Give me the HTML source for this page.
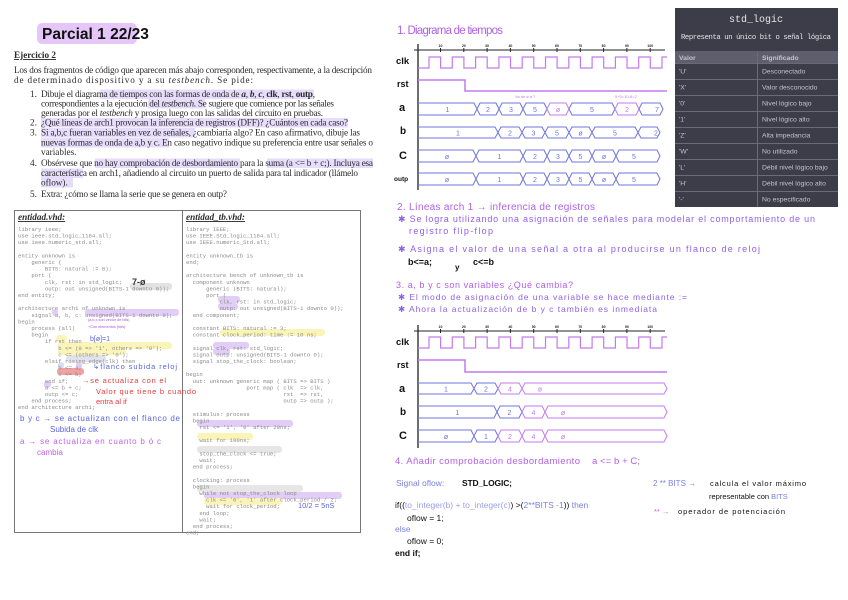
<!DOCTYPE html>
<html><head><meta charset="utf-8"><style>
html,body{margin:0;padding:0;background:#fff;width:848px;height:600px;overflow:hidden}
svg{display:block}
.s{font-family:"Liberation Serif",serif;font-size:9.2px;fill:#2a2a2a}
.m{font-family:"Liberation Mono",monospace;font-size:5.6px;fill:#8a8a8a}
.h{font-family:"Liberation Sans",sans-serif}
.tb{font-family:"Liberation Sans",sans-serif;font-size:6.8px;fill:#c4c4cc}
</style></head><body>
<svg id="S" width="848" height="600" viewBox="0 0 848 600" xmlns="http://www.w3.org/2000/svg">
<rect x="37" y="23" width="100" height="21" rx="5" fill="#e4c6f8"/>
<text x="42" y="39" class="h" font-size="15.5" font-weight="bold" fill="#111">Parcial 1 22/23</text>
<g fill="#e6dcfb">
<rect x="100" y="89.5" width="214" height="9.5"/><rect x="148" y="99" width="57" height="9.5"/>
<rect x="41" y="118" width="307" height="9.5"/><rect x="41" y="128" width="154" height="9.5"/>
<rect x="41" y="138" width="128" height="9.5"/><rect x="95" y="158.5" width="145" height="9.5"/>
<rect x="267" y="158.5" width="106" height="9.5"/><rect x="41" y="168.5" width="42" height="9.5"/><rect x="41" y="178" width="32" height="9.5"/>
</g>
<text x="14" y="58" class="s" font-weight="bold" text-decoration="underline">Ejercicio 2</text>
<text x="14" y="73" class="s" textLength="358">Los dos fragmentos de código que aparecen más abajo corresponden, respectivamente, a la descripción</text>
<text x="14" y="83" class="s" textLength="239">de determinado dispositivo y a su <tspan font-style="italic">testbench</tspan>. Se pide:</text>
<g class="s">
<text x="30" y="97">1.</text><text x="41" y="97" textLength="274">Dibuje el diagrama de tiempos con las formas de onda de <tspan font-weight="bold" font-style="italic">a</tspan>, <tspan font-weight="bold" font-style="italic">b</tspan>, <tspan font-weight="bold" font-style="italic">c</tspan>, <tspan font-weight="bold">clk</tspan>, <tspan font-weight="bold">rst</tspan>, <tspan font-weight="bold">outp</tspan>,</text>
<text x="41" y="106.5" textLength="293">correspondientes a la ejecución del <tspan font-style="italic">testbench</tspan>. Se sugiere que comience por las señales</text>
<text x="41" y="116" textLength="282">generadas por el <tspan font-style="italic">testbench</tspan> y prosiga luego con las salidas del circuito en pruebas.</text>
<text x="30" y="125.5">2.</text><text x="41" y="125.5" textLength="307">¿Qué líneas de arch1 provocan la inferencia de registros (DFF)? ¿Cuántos en cada caso?</text>
<text x="30" y="135.5">3.</text><text x="41" y="135.5" textLength="319">Si a,b,c fueran variables en vez de señales, ¿cambiaría algo? En caso afirmativo, dibuje las</text>
<text x="41" y="145.5" textLength="332">nuevas formas de onda de a,b y c. En caso negativo indique su preferencia entre usar señales o</text>
<text x="41" y="155">variables.</text>
<text x="30" y="166">4.</text><text x="41" y="166" textLength="332">Obsérvese que no hay comprobación de desbordamiento para la suma (a &lt;= b + c;). Incluya esa</text>
<text x="41" y="176" textLength="317">característica en arch1, añadiendo al circuito un puerto de salida para tal indicador (llámelo</text>
<text x="41" y="185.5">oflow).</text>
<text x="30" y="197">5.</text><text x="41" y="197" textLength="186">Extra: ¿cómo se llama la serie que se genera en outp?</text>
</g>
<rect x="14.5" y="210.5" width="346" height="322" fill="none" stroke="#777" stroke-width="1"/>
<line x1="182.5" y1="210" x2="182.5" y2="533" stroke="#777"/>
<text x="18" y="220" class="s" font-size="8.5" font-weight="bold" font-style="italic" text-decoration="underline">entidad.vhd:</text>
<text x="186" y="220" class="s" font-size="8.5" font-weight="bold" font-style="italic" text-decoration="underline">entidad_tb.vhd:</text>
<g>
<rect x="130" y="283" width="42" height="7" rx="3" fill="#e2e2e2"/>
<rect x="52" y="309" width="6" height="7" rx="3" fill="#e2cdf6"/>
<rect x="85" y="309" width="94" height="7" rx="3" fill="#e2cdf6"/>
<rect x="56" y="335" width="11" height="7" rx="3" fill="#fbf4b8"/>
<rect x="58" y="342" width="114" height="7" rx="3" fill="#fbf4b8"/>
<rect x="58" y="348" width="68" height="7" rx="3" fill="#fbf4b8"/>
<rect x="66" y="355" width="40" height="7" rx="3" fill="#e2e2ee"/>
<rect x="58" y="362" width="6" height="7" rx="3" fill="#dcdcf2"/><rect x="76" y="362" width="6" height="7" rx="3" fill="#e2cdf6"/>
<rect x="57" y="368" width="27" height="7" rx="3" fill="#eea2a2"/>
<rect x="44" y="381" width="7" height="7" rx="3" fill="#e2cdf6"/>
<rect x="218" y="296" width="22" height="7" rx="3" fill="#e2cdf6"/>
<rect x="218" y="303" width="20" height="7" rx="3" fill="#e2cdf6"/>
<rect x="220" y="329" width="105" height="7" rx="3" fill="#fbf4b8"/>
<rect x="213" y="342" width="36" height="7" rx="3" fill="#e2cdf6"/>
<rect x="213" y="348" width="17" height="7" rx="3" fill="#e2cdf6"/>
<rect x="197" y="420" width="96" height="7" rx="3" fill="#e2cdf6"/>
<rect x="197" y="433" width="56" height="7" rx="3" fill="#fbf4b8"/>
<rect x="197" y="446" width="85" height="7" rx="3" fill="#e6e6e6"/>
<rect x="197" y="485" width="106" height="7" rx="3" fill="#e6e6e6"/>
<rect x="204" y="492" width="138" height="7" rx="3" fill="#e2cdf6"/>
<rect x="204" y="498" width="78" height="7" rx="3" fill="#fbf4b8"/>
</g>
<g id="codeL" class="m"></g>
<g id="codeR" class="m"></g>
<g class="h">
<text x="132" y="285" font-size="9" font-weight="bold" fill="#333">7-ø</text>
<text x="88" y="321" font-size="3.8" fill="#b050e0">(a,b,c son vector de bits)</text>
<text x="88" y="328" font-size="3.8" fill="#b050e0">+Con elementos (bits)</text>
<text x="90" y="341" font-size="7" fill="#5a64e0">b[ø]=1</text>
<text x="93" y="369" font-size="7.5" fill="#5a64e0" textLength="84">↳flanco subida reloj</text>
<text x="82" y="383" font-size="7.5" fill="#e53a3a" textLength="84">→se actualiza con el</text>
<text x="96" y="394" font-size="7.5" fill="#e53a3a" textLength="100">Valor que tiene b cuando</text>
<text x="96" y="404" font-size="7.5" fill="#e53a3a">entra al if</text>
<text x="20" y="421" font-size="8" fill="#5a64e0" textLength="160">b y c → se actualizan con el flanco de</text>
<text x="50" y="432" font-size="8" fill="#5a64e0">Subida de clk</text>
<text x="20" y="444" font-size="8" fill="#c060e8" textLength="141">a → se actualiza en cuanto b ó c</text>
<text x="37" y="455" font-size="8" fill="#c060e8">cambia</text>
<text x="298" y="508" font-size="7.5" fill="#5a64e0">10/2 = 5nS</text>
</g>
<rect x="675" y="8" width="163" height="199" fill="#3d3d4a"/>
<text x="756" y="22" text-anchor="middle" font-family="Liberation Mono,monospace" font-size="10" fill="#e4e4ea">std_logic</text>
<text x="756" y="39" text-anchor="middle" font-family="Liberation Mono,monospace" font-size="7.2" fill="#e4e4ea" textLength="150">Representa un único bit o señal lógica</text>
<rect x="675" y="51" width="163" height="12" fill="#5e5e6c"/>
<g id="tbl"></g>
<g class="h">
<text x="397" y="34" font-size="11.5" fill="#b060e8" textLength="106">1. Diagrama de tiempos</text>
<text x="397" y="210" font-size="10" fill="#b060e8" textLength="198">2. Líneas arch 1 → inferencia de registros</text>
<text x="398" y="222" font-size="9" fill="#9060e6" textLength="417">✱ Se logra utilizando una asignación de señales para modelar el comportamiento de un</text>
<text x="409" y="234" font-size="9" fill="#9060e6" textLength="84">registro flip-flop</text>
<text x="398" y="252" font-size="9" fill="#9060e6" textLength="362">✱ Asigna el valor de una señal a otra al producirse un flanco de reloj</text>
<text x="408" y="265" font-size="9" font-weight="bold" fill="#111">b&lt;=a;</text>
<text x="455" y="270" font-size="8" font-weight="bold" fill="#111">y</text>
<text x="473" y="265" font-size="9" font-weight="bold" fill="#111">c&lt;=b</text>
<text x="396" y="288" font-size="9" fill="#b060e8" textLength="177">3. a, b y c son variables ¿Qué cambia?</text>
<text x="398" y="300" font-size="8.5" fill="#9060e6" textLength="289">✱ El modo de asignación de una variable se hace mediante :=</text>
<text x="398" y="312" font-size="8.5" fill="#9060e6" textLength="259">✱ Ahora la actualización de b y c también es inmediata</text>
<text x="395" y="464" font-size="9.5" fill="#b060e8" textLength="185">4. Añadir comprobación desbordamiento</text>
<text x="592" y="464" font-size="9.5" fill="#b060e8" textLength="48">a &lt;= b + C;</text>
<text x="396" y="486" font-size="8.5" fill="#7a82e0">Signal oflow:</text>
<text x="462" y="486" font-size="8.5" font-weight="bold" fill="#111" textLength="50">STD_LOGIC;</text>
<text x="395" y="508" font-size="8.5" fill="#111">if((<tspan fill="#9aa0e8">to_integer(b) + to_integer(c)</tspan>) &gt;(<tspan fill="#7a82e0">2**BITS -1</tspan>)) <tspan fill="#7a82e0">then</tspan></text>
<text x="407" y="521" font-size="8.5" fill="#111">oflow = 1;</text>
<text x="395" y="532" font-size="8.5" fill="#7a82e0">else</text>
<text x="407" y="544" font-size="8.5" fill="#111">oflow = 0;</text>
<text x="395" y="556" font-size="8.5" font-weight="bold" fill="#111">end if;</text>
<text x="653" y="486" font-size="8" fill="#7a82e0">2 ** BITS →</text>
<text x="710" y="486" font-size="7.5" fill="#111" textLength="96">calcula el valor máximo</text>
<text x="709" y="499" font-size="7.5" fill="#111">representable con <tspan fill="#7a82e0">BITS</tspan></text>
<text x="654" y="514" font-size="7.5" fill="#c060e8">** →</text>
<text x="678" y="514" font-size="7.5" fill="#111" textLength="107">operador de potenciación</text>
</g>
<g id="dia"></g>
</svg>
<script>
var NS="http://www.w3.org/2000/svg";
function el(p,t,a,txt){var e=document.createElementNS(NS,t);for(var k in a)e.setAttribute(k,a[k]);if(txt!=null)e.textContent=txt;p.appendChild(e);return e;}
var L=["library ieee;","use ieee.std_logic_1164.all;","use ieee.numeric_std.all;","","entity unknown is","    generic (","        BITS: natural := 8);","    port (","        clk, rst: in std_logic;","        outp: out unsigned(BITS-1 downto 0));","end entity;","","architecture arch1 of unknown is","    signal a, b, c: unsigned(BITS-1 downto 0);","begin","    process (all)","    begin","        if rst then","            b <= (0 => '1', others => '0');","            c <= (others => '0');","        elsif rising_edge(clk) then","            b <= a;","            c <= b;","        end if;","        a <= b + c;","        outp <= c;","    end process;","end architecture arch1;"];
var R=["library IEEE;","use IEEE.Std_logic_1164.all;","use IEEE.numeric_Std.all;","","entity unknown_tb is","end;","","architecture bench of unknown_tb is","  component unknown","      generic (BITS: natural);","      port (","          clk, rst: in std_logic;","          outp: out unsigned(BITS-1 downto 0));","  end component;","","  constant BITS: natural := 3;","  constant clock_period: time := 10 ns;","","  signal clk, rst: std_logic;","  signal outp: unsigned(BITS-1 downto 0);","  signal stop_the_clock: boolean;","","begin","  uut: unknown generic map ( BITS => BITS )","                  port map ( clk  => clk,","                             rst  => rst,","                             outp => outp );","","  stimulus: process","  begin","    rst <= '1', '0' after 20ns;","","    wait for 100ns;","","    stop_the_clock <= true;","    wait;","  end process;","","  clocking: process","  begin","    while not stop_the_clock loop","      clk <= '0', '1' after clock_period / 2;","      wait for clock_period;","    end loop;","    wait;","  end process;","end;"];
var cl=document.getElementById("codeL"),cr=document.getElementById("codeR");
L.forEach(function(s,i){if(s)el(cl,"text",{x:18,y:231+i*6.6},s.replace(/ /g,"\u00a0"));});
R.forEach(function(s,i){if(s)el(cr,"text",{x:186,y:231+i*6.6},s.replace(/ /g,"\u00a0"));});
var tb=document.getElementById("tbl");
el(tb,"text",{x:679,y:60,"font-weight":"bold",class:"tb",fill:"#f0f0f4"},"Valor");
el(tb,"text",{x:762,y:60,"font-weight":"bold",class:"tb",fill:"#f0f0f4"},"Significado");
var rows=[["'U'","Desconectado"],["'X'","Valor desconocido"],["'0'","Nivel lógico bajo"],["'1'","Nivel lógico alto"],["'Z'","Alta impedancia"],["'W'","No utilizado"],["'L'","Débil nivel lógico bajo"],["'H'","Débil nivel lógico alto"],["'-'","No especificado"]];
rows.forEach(function(r,i){var y=63+i*16;el(tb,"line",{x1:675,x2:838,y1:y+0.5,y2:y+0.5,stroke:"#6a6a78"});el(tb,"text",{x:679,y:y+10.5,class:"tb"},r[0]);el(tb,"text",{x:762,y:y+10.5,class:"tb"},r[1]);});
el(tb,"line",{x1:757.5,x2:757.5,y1:51,y2:207,stroke:"#6a6a78"});
var d=document.getElementById("dia");
var P="#c47aee",B="#6d74dc";
function axis(y0,y1,ya,labels){el(d,"line",{x1:418,x2:418,y1:y0,y2:y1,stroke:"#222","stroke-width":1.3});el(d,"line",{x1:414,x2:665,y1:ya,y2:ya,stroke:"#222","stroke-width":1});
for(var i=0;i<10;i++){var x=440.5+i*23.3;el(d,"line",{x1:x,x2:x,y1:ya-2,y2:ya+2,stroke:"#222"});if(labels)el(d,"text",{x:x,y:ya-3,"font-size":3.5,"text-anchor":"middle","font-family":"Liberation Sans","font-weight":"bold",fill:"#222"},String((i+1)*10));}}
function clk(yh,yl){var p="M418 "+yl;for(var i=0;i<11;i++){var x=429+i*23.3;if(x>667)break;p+=" H"+x+" V"+yh+" H"+Math.min(x+11.6,667)+" V"+(x+11.6<667?yl:yh);}p+=" H667";el(d,"path",{d:p,fill:"none",stroke:P,"stroke-width":1.2});}
function rst(yh,yl){el(d,"path",{d:"M418 "+yh+" H465 V"+yl+" H667",fill:"none",stroke:P,"stroke-width":1.5});}
function bus(y0,y1,t,lab,cols){var ym=(y0+y1)/2;for(var i=0;i<t.length-1;i++){var a=t[i],b=t[i+1],c=cols[i];var s=i==0?0:3;var p="M"+(a+s)+" "+y0+" H"+(b-3)+" L"+b+" "+ym+" L"+(b-3)+" "+y1+" H"+(a+s)+(i==0?"":" L"+a+" "+ym+" Z");el(d,"path",{d:p,fill:"none",stroke:c,"stroke-width":1});el(d,"text",{x:(i==t.length-2?a+18:(a+b)/2),y:ym+2.8,"font-size":7,"text-anchor":"middle","font-family":"Liberation Sans",fill:c},lab[i]);}}
function lbl(x,y,s,fs){el(d,"text",{x:x,y:y,"font-size":fs||9,"font-weight":"bold","font-family":"Liberation Sans",fill:"#111"},s);}
axis(44,190,50,true);clk(57,68);rst(80,91);
function rep(c,n){var a=[];for(var i=0;i<n;i++)a.push(c);return a;}
bus(103,115,[418,477,499,523,547,569,615,639,663],["1","2","3","5","ø","5","2","7"],[B,B,B,B,P,B,P,B]);
bus(127,138,[418,498,522,545,569,592,638,660],["1","2","3","5","ø","5","2"],rep(B,7));
bus(150,162,[418,476,523,547,569,592,616,660],["ø","1","2","3","5","ø","5"],rep(B,7));
bus(173,185,[418,476,523,547,569,592,616,660],["ø","1","2","3","5","ø","5"],rep(B,7));
lbl(396,64,"clk",9.5);lbl(397,87,"rst",9);lbl(399,111,"a",11);lbl(400,134,"b",10);lbl(399,159,"C",11);lbl(394,181,"outp",6.5);
el(d,"text",{x:515,y:98,"font-size":4,fill:P,"font-family":"Liberation Sans"},"Va de ø a 7");
el(d,"text",{x:615,y:98,"font-size":4,fill:P,"font-family":"Liberation Sans"},"5+5=10-8=2");
axis(325,448,331,true);clk(337,348);rst(360,372);
bus(383,394,[418,474,498,522,667],["1","2","4","ø"],[B,B,P,P]);
bus(406,418,[418,497,522,545,667],["1","2","4","ø"],[B,B,P,P]);
bus(430,442,[418,474,498,522,545,667],["ø","1","2","4","ø"],[B,B,P,P,P]);
lbl(396,345,"clk",9.5);lbl(397,368,"rst",9);lbl(399,392,"a",11);lbl(400,415,"b",10);lbl(399,439,"C",11);
</script>
</body></html>
